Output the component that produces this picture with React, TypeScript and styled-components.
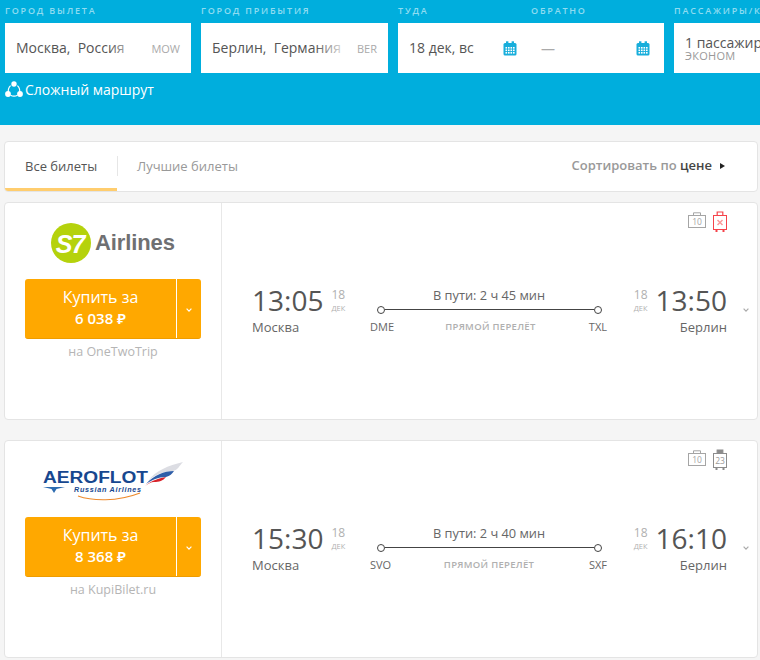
import React from "react";
import styled, { createGlobalStyle } from "styled-components";

const Global = createGlobalStyle`
  html, body { margin: 0; padding: 0; background: #f5f5f5; }
  body { font-family: "Open Sans", "Noto Sans", sans-serif; color: #555; overflow: hidden; }
  * { box-sizing: border-box; }
`;

const Page = styled.div`
  width: 760px;
  height: 660px;
  overflow: hidden;
`;

const Header = styled.header`
  height: 125px;
  background: #00aedd;
  padding: 5px 0 0 5px;
  overflow: hidden;
`;

const SearchRow = styled.div`
  display: flex;
  gap: 10px;
  width: 900px;
`;

const Group = styled.div<{ $w: number }>`
  width: ${(p) => p.$w}px;
  flex: none;
`;

const LabelRow = styled.div`
  display: flex;
  height: 18px;
`;

const Label = styled.div<{ $w?: number }>`
  font-size: 9px;
  line-height: 11px;
  font-weight: 600;
  letter-spacing: 1.8px;
  color: #8fdcf1;
  white-space: nowrap;
  width: ${(p) => (p.$w ? `${p.$w}px` : "auto")};
`;

const Field = styled.div`
  height: 50px;
  background: #fff;
  display: flex;
  align-items: center;
  position: relative;
  padding: 0 11px;
`;

const FieldText = styled.div`
  font-size: 14px;
  color: #555;
  white-space: pre;
  flex: 1;
  overflow: hidden;
  position: relative;
  margin-top: -1px;
  &::after {
    content: "";
    position: absolute;
    top: 0;
    right: 0;
    bottom: 0;
    width: 34px;
    background: linear-gradient(90deg, rgba(255, 255, 255, 0), #fff);
  }
`;

const Code = styled.div`
  font-size: 11px;
  color: #aaa;
  flex: none;
  margin-left: 8px;
  margin-top: 1px;
`;

const DateHalf = styled.div<{ $w: number }>`
  width: ${(p) => p.$w}px;
  display: flex;
  align-items: center;
  justify-content: space-between;
  flex: none;
`;

const DateText = styled.span`
  font-size: 14px;
  color: #555;
  margin-top: -1px;
`;

const Dash = styled.span`
  color: #aaa;
  font-size: 14px;
  margin-left: 24px;
`;

const PassengerField = styled(Field)`
  flex-direction: column;
  align-items: flex-start;
  justify-content: center;
`;

const PassengerMain = styled.div`
  font-size: 14px;
  line-height: 17px;
  color: #555;
  white-space: nowrap;
  margin-top: -1px;
`;

const PassengerSub = styled.div`
  font-size: 11px;
  line-height: 10px;
  color: #999;
  letter-spacing: 0.3px;
`;

const ComplexRoute = styled.div`
  display: flex;
  align-items: center;
  gap: 2px;
  margin-top: 7px;
  color: #fff;
  font-size: 14px;
  line-height: 19px;
`;

const Content = styled.main`
  padding: 16px 2px 0 4px;
  display: flex;
  flex-direction: column;
  gap: 10px;
`;

const TabsBar = styled.nav`
  height: 51px;
  background: #fff;
  border: 1px solid #e4e4e4;
  border-radius: 4px;
  display: flex;
  align-items: stretch;
  overflow: hidden;
`;

const TabActive = styled.div`
  width: 112px;
  color: #555;
  font-size: 13px;
  padding: 15px 0 0 20px;
  border-bottom: 3px solid #ffcd6e;
  position: relative;
  &::after {
    content: "";
    position: absolute;
    right: -1px;
    top: 14px;
    height: 20px;
    width: 1px;
    background: #e6e6e6;
  }
`;

const Tab = styled.div`
  color: #999;
  font-size: 13px;
  padding: 15px 0 0 20px;
`;

const Sort = styled.div`
  margin-left: auto;
  display: flex;
  align-items: center;
  gap: 8px;
  color: #999;
  font-size: 13px;
  font-weight: 600;
  padding: 0 32px 3px 0;
  b { font-weight: 600; color: #444; }
`;

const Triangle = styled.span`
  width: 0;
  height: 0;
  border-left: 5px solid #222;
  border-top: 3.5px solid transparent;
  border-bottom: 3.5px solid transparent;
  margin-top: 1px;
`;

const List = styled.div`
  display: flex;
  flex-direction: column;
  gap: 20px;
`;

const Card = styled.article`
  height: 218px;
  background: #fff;
  border: 1px solid #e4e4e4;
  border-radius: 4px;
  display: flex;
`;

const Side = styled.div`
  width: 217px;
  flex: none;
  border-right: 1px solid #e8e8e8;
  padding: 0 20px;
  display: flex;
  flex-direction: column;
`;

const LogoBox = styled.div`
  height: 76px;
  padding-top: 20px;
  display: flex;
  align-items: flex-start;
  justify-content: center;
  margin: 0 -20px;
`;

const Buy = styled.div`
  display: flex;
  height: 60px;
  width: 176px;
  border-radius: 3px;
  overflow: hidden;
  border-bottom: 1px solid #ee9c00;
  background: #ffa800;
`;

const BuyMain = styled.div`
  width: 152px;
  flex: none;
  border-right: 1px solid #fff;
  color: #fff;
  text-align: center;
  font-size: 16px;
  line-height: 21px;
  padding-top: 8px;
`;

const Price = styled.div`
  font-weight: 600;
  font-size: 15px;
`;

const BuyArrow = styled.div`
  flex: 1;
  display: flex;
  align-items: center;
  justify-content: center;
  padding-top: 3px;
`;

const Seller = styled.div`
  margin-top: 4px;
  text-align: center;
  font-size: 12.5px;
  line-height: 17px;
  color: #b5b5b5;
`;

const Main = styled.div`
  flex: 1;
  display: flex;
  flex-direction: column;
  padding: 0 0 0 30px;
`;

const Bags = styled.div`
  height: 78px;
  display: flex;
  justify-content: flex-end;
  align-items: flex-start;
  gap: 7px;
  padding: 8px 30px 0 0;
`;

const BagCase = styled.svg`
  margin-top: 1px;
`;

const Flight = styled.div`
  display: flex;
  align-items: flex-start;
`;

const TimeBlock = styled.div`
  width: 93px;
  flex: none;
`;

const TimeLine = styled.div<{ $end?: boolean }>`
  display: flex;
  justify-content: ${(p) => (p.$end ? "flex-end" : "flex-start")};
  gap: 8px;
  height: 37px;
`;

const Time = styled.div`
  font-size: 28px;
  line-height: 38px;
  color: #555;
`;

const DateMark = styled.div`
  padding-top: 6px;
  text-align: center;
  width: 14px;
`;

const Day = styled.div`
  font-size: 12px;
  line-height: 15px;
  color: #b0b0b0;
`;

const Month = styled.div`
  font-size: 7.5px;
  line-height: 9px;
  margin-top: 2px;
  color: #b0b0b0;
`;

const City = styled.div<{ $end?: boolean }>`
  font-size: 13px;
  line-height: 18px;
  color: #666;
  text-align: ${(p) => (p.$end ? "right" : "left")};
`;

const Route = styled.div`
  width: 238px;
  margin: 0 26px 0 25px;
  flex: none;
`;

const Duration = styled.div`
  font-size: 12.8px;
  line-height: 16px;
  text-align: center;
  height: 18px;
  margin-top: 6px;
  color: #666;
`;

const Line = styled.div`
  height: 9px;
  margin: 0 6px 0 7px;
  display: flex;
  align-items: center;
`;

const Dot = styled.span`
  width: 8px;
  height: 8px;
  border: 1.5px solid #444;
  border-radius: 50%;
  background: #fff;
  flex: none;
`;

const Stroke = styled.span`
  height: 1px;
  background: #444;
  flex: 1;
`;

const RouteBottom = styled.div`
  display: flex;
  align-items: center;
  justify-content: space-between;
  margin-top: 4px;
  padding-right: 1px;
  font-size: 11px;
  line-height: 18px;
  color: #666;
`;

const Direct = styled.span`
  font-size: 9.5px;
  letter-spacing: 0.3px;
  color: #b0b0b0;
  font-weight: 600;
  margin-right: 2px;
`;

const Chevron = styled.div`
  margin-left: 16px;
  padding-top: 14px;
`;

const ChevronDown = ({ color, size = 6 }: { color: string; size?: number }) => (
  <svg width={size} height={size * 0.7} viewBox="0 0 6 4">
    <path d="M0.6 0.6 L3 3 L5.4 0.6" fill="none" stroke={color} strokeWidth="1.2" />
  </svg>
);

const CalendarIcon = () => (
  <svg width="14" height="15" viewBox="0 0 14 15">
    <rect x="0.5" y="2" width="13" height="12.5" rx="1.5" fill="#18aedb" />
    <rect x="3" y="0.3" width="2.4" height="3" fill="#18aedb" />
    <rect x="8.6" y="0.3" width="2.4" height="3" fill="#18aedb" />
    <g fill="#fff">
      {[6, 8.5, 11].flatMap((y) =>
        [2.5, 5, 7.5, 10].map((x) => <rect key={`${x}-${y}`} x={x} y={y} width="1.6" height="1.6" />)
      )}
    </g>
  </svg>
);

const RouteIcon = () => (
  <svg width="18" height="17" viewBox="0 0 18 17">
    <g fill="none" stroke="#fff" strokeWidth="1.2">
      <path d="M5.6 4.6 A7 7 0 0 0 3.4 11" />
      <path d="M12.4 4.6 A7 7 0 0 1 14.6 11" />
      <path d="M5.5 14.2 A7 7 0 0 0 12.5 14.2" />
    </g>
    <circle cx="9" cy="3" r="2.7" fill="#fff" />
    <circle cx="3" cy="13" r="2.9" fill="#fff" />
    <circle cx="15" cy="13" r="2.9" fill="#fff" />
  </svg>
);

const Briefcase = ({ n }: { n: string }) => (
  <BagCase width="18" height="17" viewBox="0 0 18 17">
    <rect x="0.5" y="3.5" width="17" height="12" fill="none" stroke="#a5a5a5" />
    <path d="M5.5 3.5 V0.8 H12.5 V3.5" fill="none" stroke="#a5a5a5" />
    <text x="9" y="12.8" textAnchor="middle" fontSize="8.5" fill="#a5a5a5" fontFamily="Open Sans">{n}</text>
  </BagCase>
);

const Suitcase = ({ n, off }: { n?: string; off?: boolean }) => {
  const c = off ? "#f5434a" : "#8c8c8c";
  return (
    <svg width="14" height="22" viewBox="0 0 14 22">
      <path d="M4.2 4 V1 H9.8 V4" fill={off ? "none" : c} stroke={c} strokeWidth="1.2" />
      <rect x="0.5" y="4.5" width="13" height="14" fill="none" stroke={c} />
      <rect x="2.5" y="18.5" width="2" height="2.5" fill={c} />
      <rect x="9.5" y="18.5" width="2" height="2.5" fill={c} />
      {off ? (
        <path d="M4.5 9 L9.5 14 M9.5 9 L4.5 14" stroke="#fb9a9a" strokeWidth="1.5" />
      ) : (
        <text x="7" y="14.5" textAnchor="middle" fontSize="8.5" fill="#999" fontFamily="Open Sans">{n}</text>
      )}
    </svg>
  );
};

const S7Logo = () => (
  <svg width="124" height="40" viewBox="0 0 124 40" role="img">
    <circle cx="20" cy="20" r="20" fill="#b5d20c" />
    <text x="19" y="30" textAnchor="middle" fontFamily="Liberation Sans" fontStyle="italic" fontWeight="700" fontSize="25" fill="#fff" letterSpacing="-1">S7</text>
    <text x="44" y="27" fontFamily="Liberation Sans" fontWeight="700" fontSize="22" letterSpacing="-0.1" fill="#6f7072">Airlines</text>
  </svg>
);

const AeroflotLogo = () => (
  <svg width="142" height="42" viewBox="0 0 142 42" role="img">
    <path d="M106 20 C114 9 126 5 141 1 C137 5 136 9 131 10 C122 10 112 14 106 20 Z" fill="#dcdde3" />
    <path d="M104 23 C112 14 122 10 132 10 C130 13 128 15 124 16 C116 16 110 19 104 23 Z" fill="#2f5ea8" />
    <path d="M103 25 C110 19 118 17 124 16 C121 20 117 21 112 21 C109 21 106 23 103 25 Z" fill="#d8232a" />
    <text x="1" y="22" fontFamily="Liberation Sans" fontWeight="700" fontSize="16" fill="#17478f" textLength="105" lengthAdjust="spacingAndGlyphs">AEROFLOT</text>
    <path d="M1 26 H23 L14.5 28 L12 32 L9.5 28 Z" fill="#2c6bb0" />
    <text x="32" y="31" fontFamily="Liberation Sans" fontStyle="italic" fontWeight="700" fontSize="7.2" fill="#17478f" textLength="67">Russian Airlines</text>
    <path d="M36 35 C50 40 75 41 98 32" fill="none" stroke="#ee8a2c" strokeWidth="1.1" />
  </svg>
);

type Item = {
  logo: React.ReactNode;
  price: string;
  seller: string;
  dep: string;
  arr: string;
  duration: string;
  from: string;
  to: string;
  bag: React.ReactNode;
};

const items: Item[] = [
  { logo: <S7Logo />, price: "6 038 ₽", seller: "на OneTwoTrip", dep: "13:05", arr: "13:50", duration: "В пути: 2 ч 45 мин", from: "DME", to: "TXL", bag: <Suitcase off /> },
  { logo: <AeroflotLogo />, price: "8 368 ₽", seller: "на KupiBilet.ru", dep: "15:30", arr: "16:10", duration: "В пути: 2 ч 40 мин", from: "SVO", to: "SXF", bag: <Suitcase n="23" /> },
];

const DateBlock = () => (
  <DateMark>
    <Day>18</Day>
    <Month>ДЕК</Month>
  </DateMark>
);

const TicketCard = ({ item }: { item: Item }) => (
  <Card>
    <Side>
      <LogoBox>{item.logo}</LogoBox>
      <Buy>
        <BuyMain>
          Купить за
          <Price>{item.price}</Price>
        </BuyMain>
        <BuyArrow>
          <ChevronDown color="#fff" />
        </BuyArrow>
      </Buy>
      <Seller>{item.seller}</Seller>
    </Side>
    <Main>
      <Bags>
        <Briefcase n="10" />
        {item.bag}
      </Bags>
      <Flight>
        <TimeBlock>
          <TimeLine>
            <Time>{item.dep}</Time>
            <DateBlock />
          </TimeLine>
          <City>Москва</City>
        </TimeBlock>
        <Route>
          <Duration>{item.duration}</Duration>
          <Line>
            <Dot />
            <Stroke />
            <Dot />
          </Line>
          <RouteBottom>
            <span>{item.from}</span>
            <Direct>ПРЯМОЙ ПЕРЕЛЁТ</Direct>
            <span>{item.to}</span>
          </RouteBottom>
        </Route>
        <TimeBlock>
          <TimeLine $end>
            <DateBlock />
            <Time>{item.arr}</Time>
          </TimeLine>
          <City $end>Берлин</City>
        </TimeBlock>
        <Chevron>
          <ChevronDown color="#aaa" />
        </Chevron>
      </Flight>
    </Main>
  </Card>
);

export default function App() {
  return (
    <Page>
      <Global />
      <Header>
        <SearchRow>
          <Group $w={186}>
            <LabelRow><Label>ГОРОД ВЫЛЕТА</Label></LabelRow>
            <Field>
              <FieldText>Москва,  Россия</FieldText>
              <Code>MOW</Code>
            </Field>
          </Group>
          <Group $w={187}>
            <LabelRow><Label>ГОРОД ПРИБЫТИЯ</Label></LabelRow>
            <Field>
              <FieldText>Берлин,  Германия</FieldText>
              <Code>BER</Code>
            </Field>
          </Group>
          <Group $w={266}>
            <LabelRow>
              <Label $w={133}>ТУДА</Label>
              <Label>ОБРАТНО</Label>
            </LabelRow>
            <Field>
              <DateHalf $w={108}>
                <DateText>18 дек, вс</DateText>
                <CalendarIcon />
              </DateHalf>
              <DateHalf $w={133}>
                <Dash>—</Dash>
                <CalendarIcon />
              </DateHalf>
            </Field>
          </Group>
          <Group $w={200}>
            <LabelRow><Label>ПАССАЖИРЫ/КЛАСС</Label></LabelRow>
            <PassengerField>
              <PassengerMain>1 пассажир</PassengerMain>
              <PassengerSub>ЭКОНОМ</PassengerSub>
            </PassengerField>
          </Group>
        </SearchRow>
        <ComplexRoute>
          <RouteIcon />
          Сложный маршрут
        </ComplexRoute>
      </Header>
      <Content>
        <TabsBar>
          <TabActive>Все билеты</TabActive>
          <Tab>Лучшие билеты</Tab>
          <Sort>
            <span>Сортировать по <b>цене</b></span>
            <Triangle />
          </Sort>
        </TabsBar>
        <List>
          {items.map((item) => (
            <TicketCard key={item.price} item={item} />
          ))}
        </List>
      </Content>
    </Page>
  );
}
